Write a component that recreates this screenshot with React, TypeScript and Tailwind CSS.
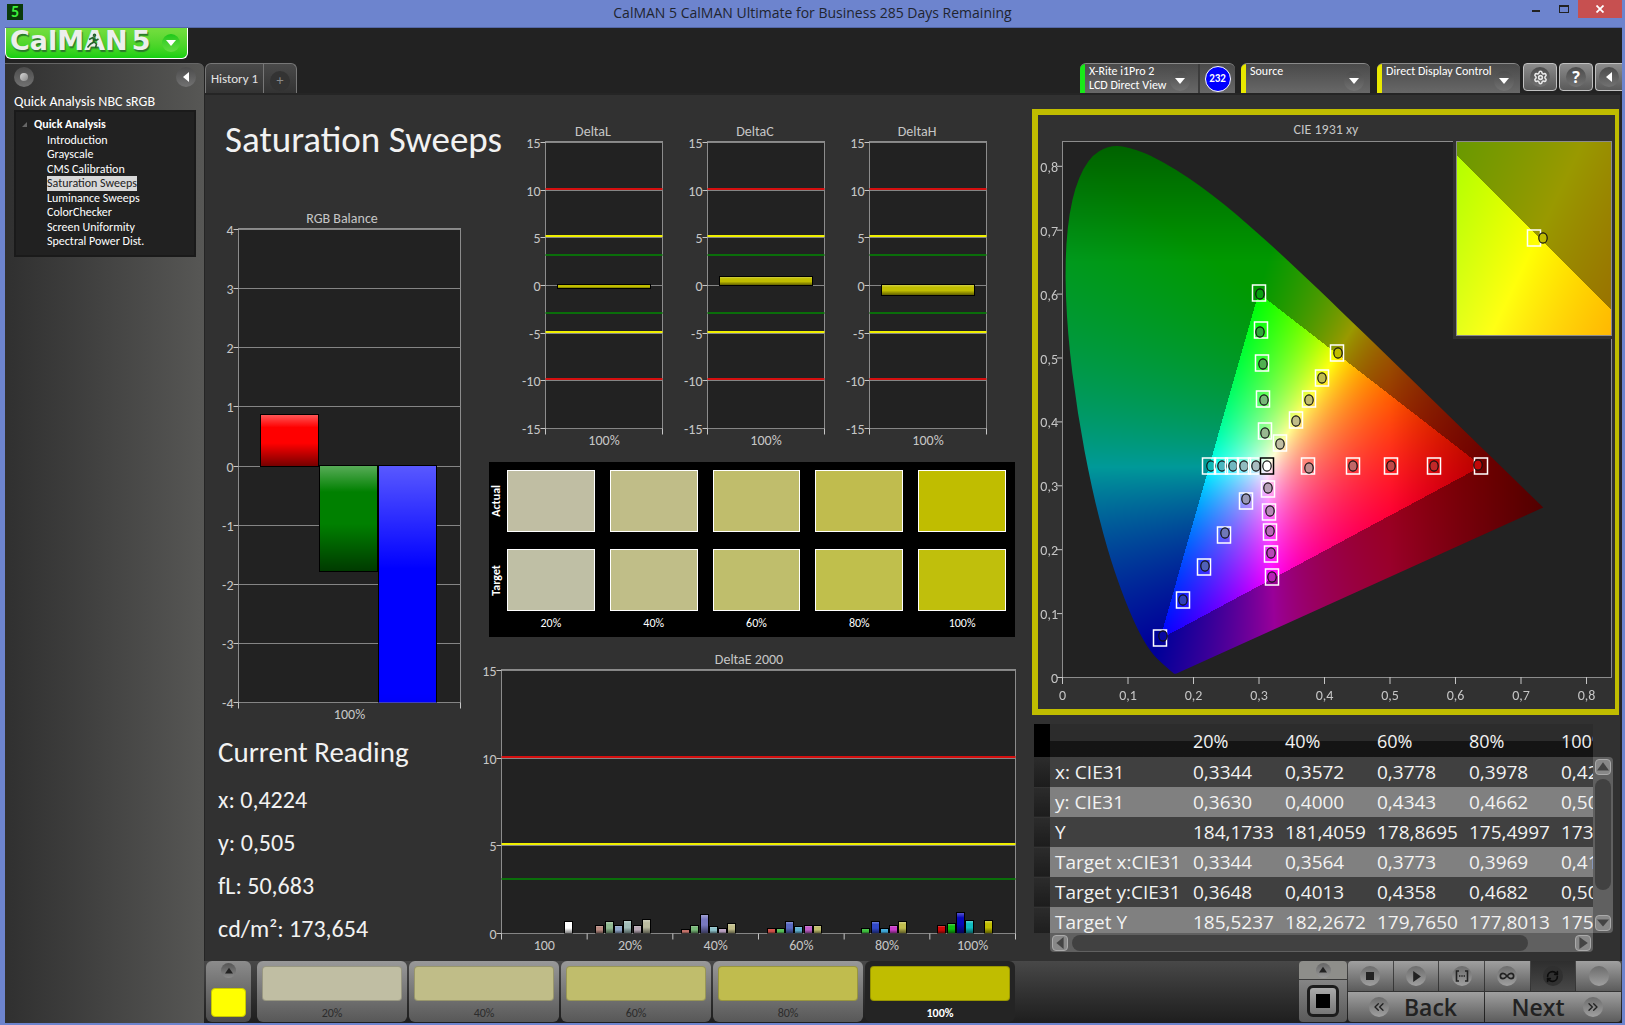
import { useId, useLayoutEffect, useRef, type ReactNode } from "react";
import { Settings, RefreshCw, ChevronsLeft, ChevronsRight, Infinity as InfinityIcon } from "lucide-react";

const PAGES = [
  "Introduction",
  "Grayscale",
  "CMS Calibration",
  "Saturation Sweeps",
  "Luminance Sweeps",
  "ColorChecker",
  "Screen Uniformity",
  "Spectral Power Dist.",
];

const LEVELS = [
  { label: "20%", actual: "#c0bea3", target: "#bfbfa5" },
  { label: "40%", actual: "#c0bd88", target: "#c0be88" },
  { label: "60%", actual: "#c0bd6c", target: "#bfbe6c" },
  { label: "80%", actual: "#c0bc4e", target: "#c0bf4c" },
  { label: "100%", actual: "#c0bd00", target: "#c0bf0c" },
];

const READINGS = ["x: 0,4224", "y: 0,505", "fL: 50,683", "cd/m²: 173,654"];

const TABLE_ROWS = [
  ["x: CIE31", "0,3344", "0,3572", "0,3778", "0,3978", "0,4224"],
  ["y: CIE31", "0,3630", "0,4000", "0,4343", "0,4662", "0,5050"],
  ["Y", "184,1733", "181,4059", "178,8695", "175,4997", "173,6540"],
  ["Target x:CIE31", "0,3344", "0,3564", "0,3773", "0,3969", "0,4193"],
  ["Target y:CIE31", "0,3648", "0,4013", "0,4358", "0,4682", "0,5053"],
  ["Target Y", "185,5237", "182,2672", "179,7650", "177,8013", "175,9120"],
];

type Bar = { x: number; w: number; value: number; color: string };
type Limit = { value: number; color: string };

const DELTA_LIMITS: Limit[] = [
  { value: 10, color: "#d40f0f" },
  { value: 5, color: "#f0f000" },
  { value: 3, color: "#0a6e0a" },
  { value: -3, color: "#0a6e0a" },
  { value: -5, color: "#f0f000" },
  { value: -10, color: "#d40f0f" },
];

const DELTA_CHARTS: { title: string; value: number }[] = [
  { title: "DeltaL", value: -0.3 },
  { title: "DeltaC", value: 0.85 },
  { title: "DeltaH", value: -1.1 },
];

const RGB_BARS: Bar[] = [
  { x: 22, w: 58, value: 0.85, color: "#ff0000" },
  { x: 81, w: 58, value: -1.78, color: "#008000" },
  { x: 140, w: 58, value: -7, color: "#0000ff" },
];

// [x, value, color]
const DELTA_E: [number, number, string][] = [
  [63, 0.6, "#ffffff"],
  [94, 0.4, "#b88a80"],
  [104, 0.6, "#90b890"],
  [113, 0.4, "#8fa6c8"],
  [122, 0.7, "#a0bcb8"],
  [132, 0.4, "#b8a8b4"],
  [141, 0.75, "#bcbca0"],
  [180, 0.15, "#c07068"],
  [189, 0.4, "#78b878"],
  [199, 1, "#7878c0"],
  [208, 0.35, "#8cc0c8"],
  [217, 0.25, "#b8a0c0"],
  [226, 0.5, "#c0bc88"],
  [266, 0.25, "#d05048"],
  [275, 0.25, "#58c058"],
  [284, 0.6, "#5868c0"],
  [293, 0.35, "#60b0d0"],
  [303, 0.4, "#c060c8"],
  [312, 0.4, "#c0bc6c"],
  [360, 0.25, "#40c040"],
  [370, 0.6, "#3048c8"],
  [379, 0.25, "#40a8d8"],
  [388, 0.4, "#c83cc8"],
  [397, 0.6, "#c0bc4e"],
  [436, 0.4, "#d00808"],
  [446, 0.5, "#10c010"],
  [455, 1.15, "#0808b8"],
  [464, 0.7, "#10bcc0"],
  [483, 0.7, "#c0bd00"],
];

type ChartProps = {
  title: string;
  titleX: number;
  size: [number, number];
  plot: [number, number, number, number];
  range: [number, number];
  step: number;
  bars: Bar[];
  limits?: Limit[];
  categories: string[];
};

function BarChart({ title, titleX, size, plot, range, step, bars, limits = [], categories }: ChartProps) {
  const id = useId();
  const [px, py, pw, ph] = plot;
  const [min, max] = range;
  const yOf = (v: number) => Math.floor(py + ((max - v) / (max - min)) * ph) + 0.5;
  const ticks: number[] = [];
  for (let v = min; v <= max; v += step) ticks.push(v);
  const slot = pw / categories.length;
  return (
    <svg viewBox={`0 0 ${size[0]} ${size[1]}`} className="block w-full overflow-visible" role="img" aria-label={title}>
      <defs>
        <linearGradient id={`${id}sheen`} x1="0" y1="0" x2="0" y2="1">
          <stop offset="0" stopColor="#fff" stopOpacity="0.35" />
          <stop offset="0.25" stopColor="#fff" stopOpacity="0" />
          <stop offset="0.55" stopColor="#000" stopOpacity="0" />
          <stop offset="1" stopColor="#000" stopOpacity="0.55" />
        </linearGradient>
        <clipPath id={`${id}clip`}>
          <rect x={px} y={py} width={pw} height={ph} />
        </clipPath>
      </defs>
      <text x={titleX} y={py - 7} textAnchor="middle" className="fill-[#c6c6c6] text-[14px]">
        {title}
      </text>
      <rect x={px} y={py - 1} width={pw} height={ph + 1} fill="#222" stroke="#8c8c8c" />
      {ticks.map((v) => (
        <g key={v}>
          <line x1={px} x2={px + pw} y1={yOf(v)} y2={yOf(v)} stroke="#858585" />
          <line x1={px - 5} x2={px} y1={yOf(v)} y2={yOf(v)} stroke="#c6c6c6" />
          <text x={px - 5} y={yOf(v) + 5} textAnchor="end" className="fill-[#c6c6c6] text-[14px]">
            {v}
          </text>
        </g>
      ))}
      {limits.map((l) => (
        <line
          key={l.value}
          x1={px}
          x2={px + pw}
          y1={yOf(l.value) - 1.5}
          y2={yOf(l.value) - 1.5}
          stroke={l.color}
          strokeWidth="2"
        />
      ))}
      <g clipPath={`url(#${id}clip)`}>
        {bars.map((b, i) => {
          const top = yOf(Math.max(b.value, 0)) - 1;
          const height = Math.abs(yOf(b.value) - yOf(0)) + 1;
          return (
            <g key={i}>
              <rect x={px + b.x} y={top} width={b.w} height={height} fill={b.color} />
              <rect x={px + b.x} y={top} width={b.w} height={height} fill={`url(#${id}sheen)`} stroke="#000" />
            </g>
          );
        })}
      </g>
      {categories.map((c, i) => (
        <g key={i}>
          <line x1={px + i * slot} x2={px + i * slot} y1={py + ph} y2={py + ph + 6} stroke="#c6c6c6" />
          <text x={px + (i + 0.5) * slot} y={py + ph + 16} textAnchor="middle" className="fill-[#c6c6c6] text-[14px]">
            {c}
          </text>
        </g>
      ))}
      <line x1={px + pw} x2={px + pw} y1={py + ph} y2={py + ph + 6} stroke="#c6c6c6" />
    </svg>
  );
}

// CIE 1931 2° spectral locus
const LOCUS: [number, number][] = [
  [0.1741, 0.005], [0.1714, 0.0051], [0.1689, 0.0069], [0.1644, 0.0109], [0.1566, 0.0177], [0.144, 0.0297],
  [0.1355, 0.0399], [0.1241, 0.0578], [0.1096, 0.0868], [0.0913, 0.1327], [0.0687, 0.2007], [0.0454, 0.295],
  [0.0235, 0.4127], [0.0082, 0.5384], [0.0039, 0.6548], [0.0139, 0.7502], [0.0389, 0.812], [0.0743, 0.8338],
  [0.1142, 0.8262], [0.1547, 0.8059], [0.1929, 0.7816], [0.2296, 0.7543], [0.2658, 0.7243], [0.3016, 0.6923],
  [0.3373, 0.6589], [0.3731, 0.6245], [0.4087, 0.5896], [0.4441, 0.5547], [0.4788, 0.5202], [0.5125, 0.4866],
  [0.5448, 0.4544], [0.5752, 0.4242], [0.6029, 0.3965], [0.627, 0.3725], [0.6482, 0.3514], [0.6658, 0.334],
  [0.6915, 0.3083], [0.7079, 0.292], [0.719, 0.2809], [0.7347, 0.2653],
];

function xyToRgb(x: number, y: number): [number, number, number] {
  const z = 1 - x - y;
  const r = 3.2406 * x - 1.5372 * y - 0.4986 * z;
  const g = -0.9689 * x + 1.8758 * y + 0.0415 * z;
  const b = 0.0557 * x - 0.204 * y + 1.057 * z;
  const inside = r >= -0.001 && g >= -0.001 && b >= -0.001;
  let k = 255 / Math.max(r, g, b);
  if (!inside) k *= 0.6;
  if (x > 0.5) k *= 1 - (x - 0.5) * 2;
  if (y > 0.65) k *= 1 - (y - 0.65) * 2;
  return [Math.max(0, r) * k, Math.max(0, g) * k, Math.max(0, b) * k];
}

type GamutProps = {
  width: number;
  height: number;
  originX: number;
  originY: number;
  unitX: number;
  unitY: number;
};

function GamutCanvas({ width, height, originX, originY, unitX, unitY }: GamutProps) {
  const ref = useRef<HTMLCanvasElement>(null);
  useLayoutEffect(() => {
    const ctx = ref.current?.getContext("2d");
    if (!ctx) return;
    const img = ctx.createImageData(width, height);
    for (let j = 0; j < height; j++) {
      for (let i = 0; i < width; i++) {
        const [r, g, b] = xyToRgb((i + 0.5 - originX) / unitX, (originY - j - 0.5) / unitY);
        img.data.set([r, g, b, 255], (j * width + i) * 4);
      }
    }
    ctx.putImageData(img, 0, 0);
    // keep only what lies within the horseshoe
    const pts = LOCUS.map(([x, y]) => [originX + x * unitX, originY - y * unitY]);
    ctx.globalCompositeOperation = "destination-in";
    ctx.beginPath();
    ctx.moveTo(pts[0][0], pts[0][1]);
    for (let i = 1; i < pts.length - 1; i++) {
      ctx.quadraticCurveTo(pts[i][0], pts[i][1], (pts[i][0] + pts[i + 1][0]) / 2, (pts[i][1] + pts[i + 1][1]) / 2);
    }
    ctx.lineTo(pts[pts.length - 1][0], pts[pts.length - 1][1]);
    ctx.closePath();
    ctx.fill();
  }, [width, height, originX, originY, unitX, unitY]);
  return <canvas ref={ref} width={width} height={height} className="block" />;
}

// [target x, target y, reading x, reading y, reading color]
const MARKERS: [number, number, number, number, string][] = [
  [221, 178, 222, 179, "#08a010"],
  [223, 215, 222, 217, "#30a838"],
  [224, 248, 225, 249, "#50b050"],
  [225, 284, 226, 285, "#78b878"],
  [227, 316, 227, 318, "#98b890"],
  [299, 238, 300, 238, "#c0bd00"],
  [284, 263, 284, 263, "#c0bc4e"],
  [271, 284, 271, 285, "#c0bd6c"],
  [258, 305, 258, 306, "#c0bd88"],
  [242, 328, 242, 329, "#c0bea3"],
  [270, 351, 271, 353, "#c09090"],
  [315, 351, 315, 351, "#c06868"],
  [353, 351, 353, 351, "#c04848"],
  [396, 351, 396, 351, "#c02828"],
  [443, 351, 440, 350, "#c00808"],
  [171, 351, 173, 351, "#10b8b8"],
  [183, 351, 184, 351, "#48b8c0"],
  [194, 351, 195, 351, "#70b8c0"],
  [206, 351, 206, 351, "#90bcc0"],
  [217, 351, 218, 351, "#a8bcc0"],
  [208, 386, 208, 384, "#9898b8"],
  [186, 420, 187, 418, "#7078b8"],
  [166, 452, 167, 451, "#5060b8"],
  [145, 485, 145, 485, "#3040b8"],
  [122, 523, 125, 521, "#0808a0"],
  [230, 374, 230, 373, "#b8a0b8"],
  [231, 397, 232, 396, "#b888b8"],
  [232, 417, 232, 416, "#b868b8"],
  [233, 439, 233, 438, "#b848b8"],
  [234, 462, 234, 462, "#b820b8"],
];

const AXIS = ["0", "0,1", "0,2", "0,3", "0,4", "0,5", "0,6", "0,7", "0,8"];

function Marker({ at, stroke = "#fff" }: { at: [number, number, number, number, string]; stroke?: string }) {
  const [tx, ty, rx, ry, color] = at;
  return (
    <g fill="none">
      <rect x={tx - 6.5} y={ty - 8} width="13" height="16" stroke={stroke} strokeWidth="1.5" />
      <ellipse cx={rx} cy={ry} rx="4.2" ry="5.2" fill={color} stroke="#111" strokeWidth="1.2" />
    </g>
  );
}

function CieChart() {
  return (
    <svg viewBox="0 0 577 594" className="block w-full" role="img" aria-label="CIE 1931 xy">
      <text x="288" y="19" textAnchor="middle" className="fill-[#c6c6c6] text-[14px]">
        CIE 1931 xy
      </text>
      <rect x="24.5" y="26.5" width="549" height="536" fill="#222" stroke="#8c8c8c" />
      <foreignObject x="25" y="27" width="548" height="535">
        <GamutCanvas width={548} height={535} originX={-1} originY={535} unitX={655} unitY={639} />
      </foreignObject>
      {AXIS.map((label, i) => (
        <g key={label}>
          <line x1={24.5 + i * 65.5} x2={24.5 + i * 65.5} y1="562" y2="569" stroke="#c6c6c6" />
          <text x={24.5 + i * 65.5} y="585" textAnchor="middle" className="fill-[#c6c6c6] text-[14px]">
            {label}
          </text>
          <line x1="19" x2="24" y1={562.5 - i * 63.9} y2={562.5 - i * 63.9} stroke="#c6c6c6" />
          <text x="20" y={568 - i * 63.9} textAnchor="end" className="fill-[#c6c6c6] text-[14px]">
            {label}
          </text>
        </g>
      ))}
      {MARKERS.map((m, i) => (
        <Marker key={i} at={m} />
      ))}
      <Marker at={[229, 351, 229, 351, "#fff"]} stroke="#000" />
      <rect x="415" y="24" width="162" height="200" fill="#313131" />
      <rect x="418.5" y="26.5" width="155" height="194" stroke="#8c8c8c" fill="none" />
      <foreignObject x="419" y="27" width="154" height="193">
        <GamutCanvas width={154} height={193} originX={-1220} originY={2067} unitX={3100} unitY={3900} />
      </foreignObject>
      <Marker at={[496, 123, 505, 123, "#c0bd00"]} />
    </svg>
  );
}

function Knob({ children, className = "size-5" }: { children?: ReactNode; className?: string }) {
  return (
    <span className={`flex shrink-0 items-center justify-center rounded-full bg-linear-to-b from-[#4c4c4c] to-[#727272] ${className}`}>
      {children}
    </span>
  );
}

function Triangle({ dir, className }: { dir: "up" | "down" | "left" | "right"; className: string }) {
  const points = {
    up: "0,8 5,1 10,8",
    down: "0,2 10,2 5,8",
    left: "8,0 8,10 2,5",
    right: "2,0 2,10 9,5",
  };
  return (
    <svg viewBox="0 0 10 10" className={className} fill="currentColor" aria-hidden>
      <polygon points={points[dir]} />
    </svg>
  );
}

function TitleBar() {
  return (
    <header className="flex h-[27px] items-start">
      <div className="flex w-[103px] shrink-0 pt-1 pl-[7px]">
        <span className="flex size-4 items-center justify-center bg-[#0a3a0a] text-[16px] leading-4 font-bold text-[#3cf03c]">5</span>
      </div>
      <h1 className="flex-1 pt-[3px] text-center font-['Open_Sans',sans-serif] text-sm text-[#1f2430]">
        CalMAN 5 CalMAN Ultimate for Business 285 Days Remaining
      </h1>
      <div className="flex h-[18px] w-[103px] shrink-0 items-start justify-end">
        <button aria-label="Minimize" className="flex h-full w-7 items-end justify-center pb-[6px]">
          <span className="h-[2px] w-2 bg-[#222]" />
        </button>
        <button aria-label="Maximize" className="flex h-full w-7 items-center justify-center">
          <span className="h-2 w-[10px] border border-t-2 border-[#222]" />
        </button>
        <button aria-label="Close" className="mr-[3px] flex h-full w-11 items-center justify-center bg-[#c75050]">
          <svg viewBox="0 0 8 8" className="size-2" stroke="#fff" strokeWidth="1.8">
            <path d="M0.5 0.5 7.5 7.5M7.5 0.5 0.5 7.5" />
          </svg>
        </button>
      </div>
    </header>
  );
}

function Logo() {
  return (
    <button
      aria-label="CalMAN 5 menu"
      className="flex h-[31px] w-[183px] items-center rounded-b-md border border-t-0 border-white bg-linear-to-b from-[#6fdc3c] from-10% to-[#10d010] pl-[4px] font-['DejaVu_Sans',sans-serif] text-[27px] leading-none font-bold text-[#ecefec]"
    >
      <span className="relative flex items-center pb-[5px] [text-shadow:1px_2px_1px_#2a7a2a]">
        CalMAN
        <svg viewBox="0 0 14 16" className="absolute top-[6px] left-[76px] h-4 w-[14px]" fill="none" stroke="#25622c" strokeWidth="1.6">
          <circle cx="8.5" cy="2.2" r="1" />
          <path d="M3 6.5 7 4.5 8 9 4.5 11 1.5 14.5M8 9 10.5 11 9.5 15M7 5.5 10 7.5 12.5 6" />
        </svg>
      </span>
      <span className="ml-1 pb-[5px] [text-shadow:1px_2px_1px_#2a7a2a]">5</span>
      <span className="ml-3 flex size-[18px] items-center justify-center rounded-full bg-linear-to-b from-[#18c818] to-[#60dc40]">
        <Triangle dir="down" className="size-[10px] text-white" />
      </span>
    </button>
  );
}

function Sidebar() {
  return (
    <aside className="w-[199px] shrink-0 rounded-tr-md border-t border-[#666] bg-linear-to-r from-[#303030] to-[#575755]">
      <div className="flex items-center justify-between pt-[3px] pr-2 pl-[9px]">
        <button aria-label="Options">
          <Knob className="size-5">
            <span className="size-2 rounded-full bg-linear-to-br from-[#d8d8d8] to-[#888]" />
          </Knob>
        </button>
        <button aria-label="Collapse sidebar">
          <Knob>
            <Triangle dir="left" className="size-[10px] text-white" />
          </Knob>
        </button>
      </div>
      <h2 className="mt-[5px] pl-[9px] text-sm leading-5 text-white">Quick Analysis NBC sRGB</h2>
      <nav className="mr-2 mt-[-2px] ml-[9px] border-2 border-[#1a1a1a] bg-[#212121] pt-[3px] pb-[6px] pl-[6px] text-[12px] text-white">
        <div className="flex h-[18px] items-center font-bold">
          <svg viewBox="0 0 6 6" className="mr-[7px] size-[5px]" fill="#666">
            <polygon points="6,0 6,6 0,6" />
          </svg>
          Quick Analysis
        </div>
        <ul className="pl-[25px]">
          {PAGES.map((page) => (
            <li key={page} className="flex h-[15px] items-center odd:h-[14px]">
              <a href="#" className={page === "Saturation Sweeps" ? "bg-[#d8d8d8] leading-[15px] text-[#222]" : "leading-[15px]"}>
                {page}
              </a>
            </li>
          ))}
        </ul>
      </nav>
    </aside>
  );
}

function DeviceTab({ bar, width, children }: { bar: string; width: string; children: ReactNode }) {
  return (
    <div className={`flex h-[30px] overflow-hidden rounded-t-md border-t border-[#8a8a8a] bg-linear-to-b from-[#4a4a4a] to-[#686868] text-[12px] leading-[14px] text-white ${width}`}>
      <span className={`w-[5px] shrink-0 ${bar}`} />
      {children}
    </div>
  );
}

function DropButton({ label }: { label: string }) {
  return (
    <button aria-label={label} className="ml-auto flex items-center pt-1 pr-[6px]">
      <Knob>
        <Triangle dir="down" className="size-[10px] text-white" />
      </Knob>
    </button>
  );
}

const TOOL_BUTTON =
  "flex h-7 items-center justify-center rounded-sm border border-[#c0c0c0] bg-linear-to-b from-[#8c8c8c] to-[#5a5a5a]";

function TopTabs() {
  return (
    <div className="flex h-[30px] items-start justify-between">
      <div className="ml-px flex h-[30px] rounded-t-md border border-b-0 border-[#777] bg-linear-to-b from-[#4a4a4a] to-[#333] text-[13px] text-[#e4e4e4]">
        <button className="w-[58px] border-r border-[#777]">History 1</button>
        <button aria-label="Add history" className="flex w-8 items-center justify-center pt-1">
          <span className="flex size-5 items-center justify-center rounded-full bg-[#333] text-[14px] leading-none text-[#8a8a8a]">+</span>
        </button>
      </div>
      <div className="flex items-start">
        <DeviceTab bar="bg-[#18e818]" width="w-[155px]">
          <span className="pl-[4px] whitespace-nowrap">
            X-Rite i1Pro 2
            <br />
            LCD Direct View
          </span>
          <DropButton label="Meter options" />
          <span className="ml-[2px] flex w-[37px] items-center justify-center border-l-2 border-[#3c3c3c]">
            <span className="flex size-[26px] items-center justify-center rounded-full border border-white bg-[#0000ff] text-[11px] font-bold">
              232
            </span>
          </span>
        </DeviceTab>
        <div className="w-[6px]" />
        <DeviceTab bar="bg-[#e8e800]" width="w-[129px]">
          <span className="pl-1">Source</span>
          <DropButton label="Source options" />
        </DeviceTab>
        <div className="w-[7px]" />
        <DeviceTab bar="bg-[#e8e800]" width="w-[143px]">
          <span className="pl-1 whitespace-nowrap">Direct Display Control</span>
          <DropButton label="Display options" />
        </DeviceTab>
        <button aria-label="Settings" className={`ml-[3px] w-[34px] ${TOOL_BUTTON}`}>
          <Knob>
            <Settings className="size-[15px] text-[#e8e8e8]" strokeWidth={2.5} />
          </Knob>
        </button>
        <button aria-label="Help" className={`ml-[2px] w-[34px] ${TOOL_BUTTON}`}>
          <Knob className="size-5 font-['Open_Sans',sans-serif] text-[16px] leading-none font-bold text-white">?</Knob>
        </button>
        <button aria-label="Collapse panel" className={`ml-[2px] w-[27px] rounded-r-none border-r-0 ${TOOL_BUTTON}`}>
          <Knob>
            <Triangle dir="left" className="size-[10px] text-white" />
          </Knob>
        </button>
      </div>
    </div>
  );
}

function Swatches() {
  return (
    <div className="mr-[9px] bg-black pt-2 pb-1 text-[12px] text-white">
      {(["actual", "target"] as const).map((kind) => (
        <div key={kind} className="mb-[17px] flex">
          <div className="flex w-[18px] shrink-0 items-center justify-center pr-1">
            <span className="rotate-180 font-bold capitalize leading-none [writing-mode:vertical-rl]">{kind}</span>
          </div>
          <div className="grid flex-1 grid-cols-5 gap-[15px] pr-[9px]">
            {LEVELS.map((l) => (
              <div key={l.label} className="h-[62px] border border-white" style={{ backgroundColor: l[kind] }} />
            ))}
          </div>
        </div>
      ))}
      <div className="-mt-[15px] grid grid-cols-5 gap-[15px] pr-[9px] pl-[18px] text-center leading-5">
        {LEVELS.map((l) => (
          <span key={l.label}>{l.label}</span>
        ))}
      </div>
    </div>
  );
}

const SCROLL_BUTTON = "flex size-4 shrink-0 items-center justify-center rounded-sm border border-[#aaa] bg-[#888] text-[#444]";

function ReadingsTable() {
  return (
    <div className="mt-[9px] grid grid-cols-[1fr_20px] pr-[7px] pl-[2px]">
      <div className="h-[209px] overflow-hidden">
        <table className="w-[619px] table-fixed border-collapse text-left font-['Open_Sans',sans-serif] text-[19px] leading-none text-[#f2f2f2]">
          <thead>
            <tr className="h-[33px] bg-linear-to-b from-[#2c2c2c] from-50% to-[#141414] to-50%">
              <th className="w-4 bg-black" />
              <th className="w-[143px]" />
              {LEVELS.map((l) => (
                <th key={l.label} className="w-[92px] text-[18px] font-normal">
                  {l.label}
                </th>
              ))}
            </tr>
          </thead>
          <tbody>
            {TABLE_ROWS.map(([name, ...cells]) => (
              <tr key={name} className="h-[30px] bg-[#404040] even:bg-[#808080]">
                <td className="border-b border-[#333] bg-linear-to-b from-[#2c2c2c] to-[#1c1c1c]" />
                <th scope="row" className="pl-[5px] font-normal whitespace-nowrap">
                  {name}
                </th>
                {cells.map((c, i) => (
                  <td key={i}>{c}</td>
                ))}
              </tr>
            ))}
          </tbody>
        </table>
      </div>
      <div className="mt-[33px] flex flex-col items-center justify-between rounded-r-sm bg-[#606060] py-[2px]">
        <button aria-label="Scroll up" className={SCROLL_BUTTON}>
          <Triangle dir="up" className="size-3" />
        </button>
        <div className="mt-1 mb-auto h-[111px] w-4 rounded-full bg-[#414141]" />
        <button aria-label="Scroll down" className={SCROLL_BUTTON}>
          <Triangle dir="down" className="size-3" />
        </button>
      </div>
      <div className="ml-4 flex h-[19px] items-center rounded-b-sm bg-[#606060] px-[2px]">
        <button aria-label="Scroll left" className={SCROLL_BUTTON}>
          <Triangle dir="left" className="size-3" />
        </button>
        <div className="mr-[47px] ml-1 h-4 flex-1 rounded-full bg-[#414141]" />
        <button aria-label="Scroll right" className={SCROLL_BUTTON}>
          <Triangle dir="right" className="size-3" />
        </button>
      </div>
    </div>
  );
}

function Dashboard() {
  return (
    <main className="grid flex-1 grid-cols-[284fr_535fr_596fr] border-x border-t-2 border-r-2 border-[#252525] bg-[#313131]">
      <section className="min-w-0">
        <h2 className="mt-[17px] pl-[20px] text-[37px] leading-[56px] whitespace-nowrap text-[#f2f2f2]">Saturation Sweeps</h2>
        <div className="mt-[37px]">
          <BarChart
            title="RGB Balance"
            titleX={137}
            size={[284, 520]}
            plot={[33.5, 24.5, 222, 473]}
            range={[-4, 4]}
            step={1}
            bars={RGB_BARS}
            categories={["100%"]}
          />
        </div>
        <div className="pl-[13px] text-[#f2f2f2]">
          <h3 className="mt-[7px] text-[29px] leading-10">Current Reading</h3>
          <ul className="mt-[6px] text-[24px] leading-[43px]">
            {READINGS.map((r) => (
              <li key={r}>{r}</li>
            ))}
          </ul>
        </div>
      </section>
      <section className="min-w-0">
        <div className="mt-[25px] grid grid-cols-3 pr-7 pl-[21px]">
          {DELTA_CHARTS.map((c) => (
            <BarChart
              key={c.title}
              title={c.title}
              titleX={83}
              size={[162, 332]}
              plot={[35.5, 22.5, 117, 286]}
              range={[-15, 15]}
              step={5}
              limits={DELTA_LIMITS}
              bars={[{ x: 12, w: 93, value: c.value, color: "#c0bd00" }]}
              categories={["100%"]}
            />
          ))}
        </div>
        <div className="mt-[10px]">
          <Swatches />
        </div>
        <div className="mt-[13px]">
          <BarChart
            title="DeltaE 2000"
            titleX={260}
            size={[535, 306]}
            plot={[12.5, 20.5, 514, 263]}
            range={[0, 15]}
            step={5}
            limits={DELTA_LIMITS.filter((l) => l.value > 0)}
            bars={DELTA_E.map(([x, value, color]) => ({ x, w: 8, value, color }))}
            categories={["100", "20%", "40%", "60%", "80%", "100%"]}
          />
        </div>
      </section>
      <section className="min-w-0 pl-2">
        <div className="mt-[14px] mr-px border-6 border-r-4 border-[#c0bd00]">
          <CieChart />
        </div>
        <ReadingsTable />
      </section>
    </main>
  );
}

const STEEL = "bg-linear-to-b from-[#a0a0a0] to-[#5c5c5c]";
const TRANSPORT = `flex h-[30px] items-center justify-center text-[#222] ${STEEL}`;

function KnobLight({ children }: { children?: ReactNode }) {
  return (
    <span className="flex size-5 items-center justify-center rounded-full bg-linear-to-b from-[#6c6c6c] to-[#a0a0a0]">{children}</span>
  );
}

function BottomBar() {
  return (
    <footer className="flex h-[62px] items-start justify-between bg-linear-to-b from-[#484848] to-[#1e1e1e]">
      <div className="flex">
        <button aria-label="Pattern color" className="ml-[2px] flex h-[61px] w-[45px] flex-col items-center rounded-md bg-linear-to-b from-[#8c8c8c] to-[#4c4c4c] pt-[2px]">
          <span className="flex size-[15px] items-center justify-center rounded-full bg-linear-to-b from-[#555] to-[#8a8a8a]">
            <Triangle dir="up" className="size-2 text-[#222]" />
          </span>
          <span className="mt-[10px] h-[29px] w-[35px] rounded-sm border border-[#c8c800] bg-[#ffff00]" />
        </button>
        <div className="ml-[6px] flex gap-[2px]">
          {LEVELS.map((l) => {
            const active = l.label === "100%";
            return (
              <button
                key={l.label}
                className={`flex h-[61px] w-[150px] flex-col items-center rounded-md pt-[5px] text-[12px] ${
                  active ? "bg-[#242424] font-bold text-white" : "bg-linear-to-b from-[#999] to-[#585858] text-[#2c2c2c]"
                }`}
              >
                <span className="h-9 w-[140px] rounded-sm border border-black/20" style={{ backgroundColor: l.actual }} />
                <span className="mt-[3px]">{l.label}</span>
              </button>
            );
          })}
        </div>
      </div>
      <div className="mr-px flex gap-px">
        <div className="flex h-[61px] w-12 flex-col gap-px">
          <button aria-label="Show patterns" className="flex h-[18px] items-center justify-center rounded-t-sm bg-[#8e8e8a]">
            <span className="flex size-[15px] items-center justify-center rounded-full bg-linear-to-b from-[#666] to-[#999]">
              <Triangle dir="up" className="size-2 text-[#222]" />
            </span>
          </button>
          <button aria-label="Pattern window" className="flex flex-1 items-center justify-center rounded-b-sm bg-linear-to-b from-[#858585] to-[#5a5a5a]">
            <span className="flex size-8 items-center justify-center rounded-md border-3 border-[#1c1c1c] bg-linear-to-b from-[#aaa] to-[#777]">
              <span className="size-[14px] bg-black" />
            </span>
          </button>
        </div>
        <div className="grid w-[273px] grid-cols-6 gap-px">
          <button aria-label="Stop" className={`rounded-tl-sm ${TRANSPORT}`}>
            <KnobLight>
              <span className="size-2 bg-[#222]" />
            </KnobLight>
          </button>
          <button aria-label="Play" className={TRANSPORT}>
            <KnobLight>
              <Triangle dir="right" className="ml-[2px] size-[11px]" />
            </KnobLight>
          </button>
          <button aria-label="Read series" className={TRANSPORT}>
            <KnobLight>
              <svg viewBox="0 0 14 12" className="h-3 w-[14px]" fill="none" stroke="currentColor" strokeWidth="1.6">
                <path d="M4 1H1.5V11H4M10 1H12.5V11H10M4 6H5.4M6.3 6H7.7M8.6 6H10" />
              </svg>
            </KnobLight>
          </button>
          <button aria-label="Read continuously" className={TRANSPORT}>
            <KnobLight>
              <InfinityIcon className="size-4" strokeWidth={2.5} />
            </KnobLight>
          </button>
          <button aria-label="Auto advance" className="flex h-[30px] items-center justify-center bg-linear-to-b from-[#2e2e2e] to-[#484848] text-[#0c0c0c]">
            <span className="flex size-5 items-center justify-center rounded-full bg-[#303030]">
              <RefreshCw className="size-[13px]" strokeWidth={3} />
            </span>
          </button>
          <button aria-label="Record" className={`rounded-tr-sm ${TRANSPORT}`}>
            <KnobLight />
          </button>
          <button className={`col-span-3 gap-[15px] rounded-bl-sm pr-[6px] font-['Open_Sans',sans-serif] text-[23px] leading-none font-semibold ${TRANSPORT}`}>
            <KnobLight>
              <ChevronsLeft className="size-4" strokeWidth={2} />
            </KnobLight>
            Back
          </button>
          <button className={`col-span-3 gap-[18px] rounded-br-sm pl-2 font-['Open_Sans',sans-serif] text-[23px] leading-none font-semibold ${TRANSPORT}`}>
            Next
            <KnobLight>
              <ChevronsRight className="size-4" strokeWidth={2} />
            </KnobLight>
          </button>
        </div>
      </div>
    </footer>
  );
}

export default function App() {
  return (
    <div className="flex min-h-screen flex-col bg-[#6d84ce] font-[Carlito,Lato,sans-serif]">
      <TitleBar />
      <div className="mr-[3px] mb-[2px] ml-[5px] flex flex-1 flex-col border-t border-[#5468a8] bg-[#222]">
        <div className="h-[35px]">
          <Logo />
        </div>
        <div className="flex flex-1">
          <Sidebar />
          <div className="flex min-w-0 flex-1 flex-col">
            <TopTabs />
            <Dashboard />
            <BottomBar />
          </div>
        </div>
      </div>
    </div>
  );
}
